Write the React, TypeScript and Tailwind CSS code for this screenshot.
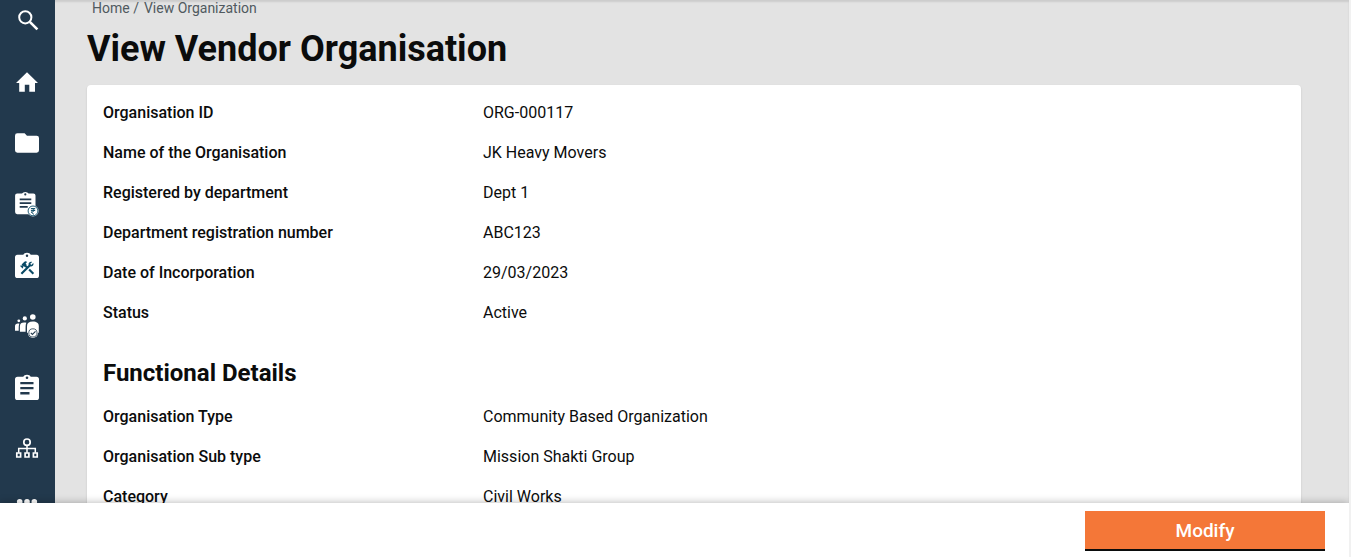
import type { ReactNode } from "react";

type Field = { label: string; value: string };

const basicDetails: Field[] = [
  { label: "Organisation ID", value: "ORG-000117" },
  { label: "Name of the Organisation", value: "JK Heavy Movers" },
  { label: "Registered by department", value: "Dept 1" },
  { label: "Department registration number", value: "ABC123" },
  { label: "Date of Incorporation", value: "29/03/2023" },
  { label: "Status", value: "Active" },
];

const functionalDetails: Field[] = [
  { label: "Organisation Type", value: "Community Based Organization" },
  { label: "Organisation Sub type", value: "Mission Shakti Group" },
  { label: "Category", value: "Civil Works" },
];

const CLIPBOARD =
  "M21.4 1.7h-5.6a4 2.7 0 0 0-7.6 0H2.6A2.6 2.6 0 0 0 0 4.3v18.1A2.6 2.6 0 0 0 2.6 25h18.8a2.6 2.6 0 0 0 2.6-2.6V4.3a2.6 2.6 0 0 0-2.6-2.6z";

const navItems: { name: string; icon: ReactNode }[] = [
  {
    name: "Search",
    icon: (
      <g fill="none" stroke="currentColor">
        <circle cx="10.3" cy="8.3" r="6.1" strokeWidth="2" />
        <path d="M14.8 12.8l7.6 7.6" strokeWidth="2.6" />
      </g>
    ),
  },
  {
    name: "Home",
    icon: <path d="M9.8 21.7v-7h4.5v7H20V13h3L12 2.3 1 13h3.2v8.7z" />,
  },
  {
    name: "Projects",
    icon: (
      <path d="M9.6 2.3H2.4A2.4 2.4 0 0 0 0 4.7v14.6a2.4 2.4 0 0 0 2.4 2.4h19.2a2.4 2.4 0 0 0 2.4-2.4V7.1a2.4 2.4 0 0 0-2.4-2.4H12z" />
    ),
  },
  {
    name: "Billing",
    icon: (
      <>
        <path d="M18.4 1.5h-4.8a3.6 2.7 0 0 0-6.6 0H2.2A2.1 2.1 0 0 0 0.1 3.6v16.5a2.1 2.1 0 0 0 2.1 2.1h16.2a2.1 2.1 0 0 0 2.1-2.1V3.6a2.1 2.1 0 0 0-2.1-2.1z" />
        <circle cx="10.3" cy="2.4" r="1.1" fill="#22394d" />
        <path d="M4.7 6.4h11.6v1.8H4.7zM4.7 10.2h11.6V12H4.7zM4.7 14h8v1.8h-8z" fill="#22394d" />
        <circle cx="18" cy="18.9" r="5.6" />
        <circle cx="18" cy="18.9" r="4.9" fill="none" stroke="#0b4b66" strokeWidth="0.9" />
        <path
          d="M15.9 16.6h4.3M15.9 18.4h4.3M16.6 16.6c3.2 0 3.2 3.4 0 3.4h-.4l2.7 2.4"
          fill="none"
          stroke="#0b4b66"
          strokeWidth="1"
        />
      </>
    ),
  },
  {
    name: "Works",
    icon: (
      <>
        <path d={CLIPBOARD} />
        <circle cx="12" cy="2.7" r="1.2" fill="#22394d" />
        <g fill="#0b4b66" transform="translate(3.6 6.5) scale(0.71)">
          <path d="M13.78 15.17l2.12-2.12 6 6-2.12 2.12z" />
          <path d="M17.5 10c1.93 0 3.5-1.57 3.5-3.5 0-.58-.16-1.12-.41-1.6l-2.7 2.7-1.49-1.49 2.7-2.7c-.48-.25-1.02-.41-1.6-.41C15.57 3 14 4.57 14 6.5c0 .41.08.8.21 1.16l-1.85 1.85-1.78-1.78.71-.71-1.41-1.41L12 3.49a3 3 0 0 0-4.24 0L4.22 7.03l1.41 1.41H2.81l-.71.71 3.54 3.54.71-.71V9.15l1.41 1.41.71-.71 1.78 1.78-7.41 7.41 2.12 2.12L16.34 9.79c.36.13.75.21 1.16.21z" />
        </g>
      </>
    ),
  },
  {
    name: "Masters",
    icon: (
      <>
        <circle cx="3.8" cy="6.8" r="1.4" />
        <circle cx="9.8" cy="4.4" r="2.1" />
        <circle cx="17.8" cy="3" r="2.8" />
        <path d="M0 16.7v-4.5c0-2.4 2-3.1 4.4-2.5-.7 1.3-.7 3.2-.7 7z" />
        <path d="M4.9 17.7v-5.5c0-3.4 3-4.2 6.5-3.4-.9 1.4-.8 4-.8 8.9z" />
        <path d="M12 18.8v-6.6c0-3 2-4.6 5.8-4.6s6 1.6 6 4.6v6.6z" />
        <circle cx="17.9" cy="18.9" r="5" />
        <circle cx="17.9" cy="18.9" r="4.1" fill="none" stroke="#22394d" strokeWidth="0.8" />
        <path d="M15.8 18.8l1.6 1.7 3.1-3.2" fill="none" stroke="#22394d" strokeWidth="1.1" />
      </>
    ),
  },
  {
    name: "Measurement",
    icon: (
      <>
        <path d={CLIPBOARD} />
        <circle cx="12" cy="2.8" r="1.3" fill="#22394d" />
        <path d="M5.3 6.9h13.2v2.3H5.3zM5.3 12h13.2v2.3H5.3zM5.3 17.1h9.2v2.3H5.3z" fill="#22394d" />
      </>
    ),
  },
  {
    name: "Organisation",
    icon: (
      <g fill="none" stroke="currentColor" strokeWidth="1.7">
        <circle cx="12" cy="6.2" r="3.2" />
        <path d="M12 9.4v7.4M3.7 16.8v-4.2h16.6v4.2" strokeWidth="1.5" />
        <path d="M1.8 17h3.8v4H1.8zM10.1 17h3.8v4h-3.8zM18.4 17h3.8v4h-3.8z" />
      </g>
    ),
  },
  {
    name: "Groups",
    icon: (
      <>
        <circle cx="4.7" cy="4.8" r="2.8" />
        <circle cx="12" cy="4.8" r="2.8" />
        <circle cx="19.3" cy="4.8" r="2.8" />
        <path d="M1 14a4 4 0 0 1 7.4 0zM8.3 14a4 4 0 0 1 7.4 0zM15.6 14a4 4 0 0 1 7.4 0z" />
      </>
    ),
  },
];

function Sidebar() {
  return (
    <nav className="flex w-[55px] shrink-0 flex-col gap-[37px] overflow-hidden bg-[#22394d] pt-[9px] pl-[15px] text-white">
      {navItems.map((item) => (
        <a key={item.name} href="#" aria-label={item.name} className="block size-6 shrink-0">
          <svg viewBox="0 0 24 24" className="size-6 overflow-visible" fill="currentColor" aria-hidden="true">
            {item.icon}
          </svg>
        </a>
      ))}
    </nav>
  );
}

function FieldList({ fields }: { fields: Field[] }) {
  return (
    <dl className="flex flex-col gap-4">
      {fields.map((field) => (
        <div key={field.label} className="flex text-base leading-6">
          <dt className="w-[380px] shrink-0 font-medium">{field.label}</dt>
          <dd>{field.value}</dd>
        </div>
      ))}
    </dl>
  );
}

export default function App() {
  return (
    <div className="flex h-screen flex-col overflow-hidden border-r-2 border-[#f1f1f1] bg-[#e3e3e3] font-['Roboto',sans-serif] text-[#0b0c0c]">
      <div className="flex min-h-0 flex-1 shadow-[inset_0_2px_2px_rgba(0,0,0,0.1)]">
        <Sidebar />
        <main className="min-w-0 flex-1 overflow-hidden pr-12 pl-8">
          <nav aria-label="Breadcrumb" className="flex gap-[5px] pl-[5px] text-sm leading-4 text-[#505a5f]">
            <a href="#">Home /</a>
            <a href="#">View Organization</a>
          </nav>
          <h1 className="mt-[13px] text-4xl leading-10 font-bold">View Vendor Organisation</h1>
          <section className="mt-4 rounded bg-white p-4 shadow-[0_1px_2px_rgba(0,0,0,0.16)]">
            <FieldList fields={basicDetails} />
            <h2 className="mt-8 mb-4 text-2xl leading-8 font-bold">Functional Details</h2>
            <FieldList fields={functionalDetails} />
          </section>
        </main>
      </div>
      <footer className="relative flex justify-end bg-white pt-2 pr-6 pb-[6px] shadow-[0_0_8px_rgba(0,0,0,0.3)]">
        <button
          type="button"
          className="h-10 w-60 border-b-2 border-[#0b0c0c] bg-[#f47738] pt-[2px] text-[19px] leading-6 font-medium text-white"
        >
          Modify
        </button>
      </footer>
    </div>
  );
}
